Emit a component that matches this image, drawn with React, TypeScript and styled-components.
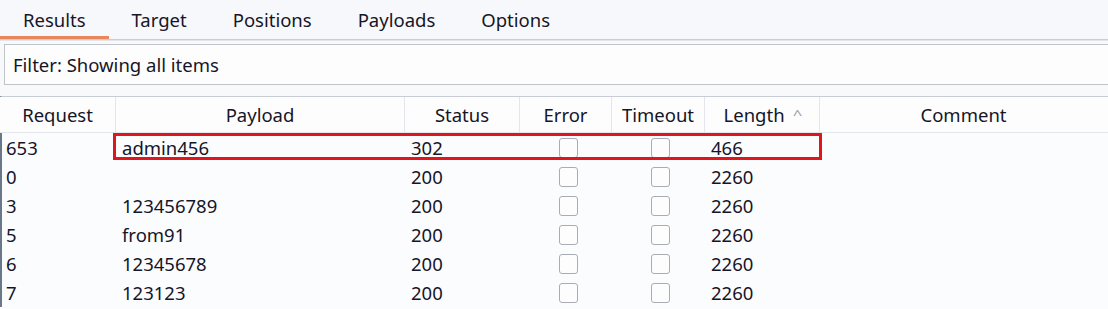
import React from "react";
import styled, { createGlobalStyle } from "styled-components";

const GlobalStyle = createGlobalStyle`
    html, body {
        margin: 0;
        padding: 0;
        background: #fbfcfe;
    }
    body {
        font-family: "Noto Sans", "Open Sans", sans-serif;
        color: #161528;
    }
`;

interface Row {
    request: string;
    payload: string;
    status: string;
    length: string;
    highlight?: boolean;
}

const rows: Row[] = [
    { request: "653", payload: "admin456", status: "302", length: "466", highlight: true },
    { request: "0", payload: "", status: "200", length: "2260" },
    { request: "3", payload: "123456789", status: "200", length: "2260" },
    { request: "5", payload: "from91", status: "200", length: "2260" },
    { request: "6", payload: "12345678", status: "200", length: "2260" },
    { request: "7", payload: "123123", status: "200", length: "2260" },
];

const tabs = ["Results", "Target", "Positions", "Payloads", "Options"];

const columns = "116px 289px 115px 92px 93px 115px 1fr";

export default function App() {
    return (
        <Page>
            <GlobalStyle />
            <TabBar>
                {tabs.map((t, i) => (
                    <Tab key={t} active={i === 0}>
                        {t}
                    </Tab>
                ))}
            </TabBar>
            <FilterArea>
                <FilterBox>Filter: Showing all items</FilterBox>
            </FilterArea>
            <TableArea>
                <HeaderRow>
                    <HeadCell>Request</HeadCell>
                    <HeadCell>Payload</HeadCell>
                    <HeadCell>Status</HeadCell>
                    <HeadCell>Error</HeadCell>
                    <HeadCell>Timeout</HeadCell>
                    <HeadCell>
                        Length <SortArrow>^</SortArrow>
                    </HeadCell>
                    <HeadCell last>Comment</HeadCell>
                </HeaderRow>
                {rows.map((r) => (
                    <DataRow key={r.request}>
                        <Cell>{r.request}</Cell>
                        <Cell>{r.payload}</Cell>
                        <Cell>{r.status}</Cell>
                        <BoxCell>
                            <CheckBox />
                        </BoxCell>
                        <BoxCell>
                            <CheckBox />
                        </BoxCell>
                        <Cell>{r.length}</Cell>
                        <Cell />
                        {r.highlight && <Highlight />}
                    </DataRow>
                ))}
            </TableArea>
        </Page>
    );
}

const Page = styled.div`
    width: 1108px;
    height: 309px;
    overflow: hidden;
    font-size: 18.5px;
`;

const TabBar = styled.div`
    display: flex;
    height: 39px;
    background: #f6f8fb;
    border-bottom: 1px solid #c9ced6;
`;

const Tab = styled.div<{ active?: boolean }>`
    display: flex;
    align-items: center;
    padding: 2px 23px 0 23px;
    box-sizing: border-box;
    height: 39px;
    border-bottom: 3px solid ${(p) => (p.active ? "#e8865c" : "transparent")};
`;

const FilterArea = styled.div`
    padding: 3px 0 11px 4px;
    border-top: 1px solid #e2e6eb;
    background: #f7f9fb;
`;

const FilterBox = styled.div`
    height: 39px;
    display: flex;
    align-items: center;
    padding-left: 8px;
    background: #fdfdfe;
    border: 1px solid #bfc4cb;
    border-right: none;
`;

const TableArea = styled.div`
    border-left: 2px solid #6a7788;
    border-top: 1px solid #c9ced6;
    background: #fbfcfe;
`;

const HeaderRow = styled.div`
    display: grid;
    grid-template-columns: ${columns};
    height: 35px;
    background: #fdfdfe;
    border-bottom: 1px solid #e3e6ea;
    margin-left: -2px;
`;

const HeadCell = styled.div<{ last?: boolean }>`
    display: flex;
    align-items: center;
    justify-content: center;
    border-right: 1px solid ${(p) => (p.last ? "transparent" : "#e3e6ea")};
`;

const SortArrow = styled.span`
    margin-left: 9px;
    font-size: 12px;
    color: #9aa0a8;
    transform: scaleX(1.4);
`;

const DataRow = styled.div`
    position: relative;
    display: grid;
    grid-template-columns: ${columns};
    height: 29px;
    margin-left: -2px;
`;

const Cell = styled.div`
    display: flex;
    align-items: center;
    padding-left: 6px;
`;

const BoxCell = styled.div`
    display: flex;
    align-items: center;
    justify-content: center;
    padding-left: 4px;
`;

const CheckBox = styled.span`
    width: 17px;
    height: 18px;
    border: 1px solid #a9adb3;
    border-radius: 3px;
    background: #fdfdfe;
`;

const Highlight = styled.div`
    position: absolute;
    left: 113px;
    top: 0;
    width: 709px;
    height: 27px;
    box-sizing: border-box;
    border: 3px solid #e0161e;
    pointer-events: none;
`;
